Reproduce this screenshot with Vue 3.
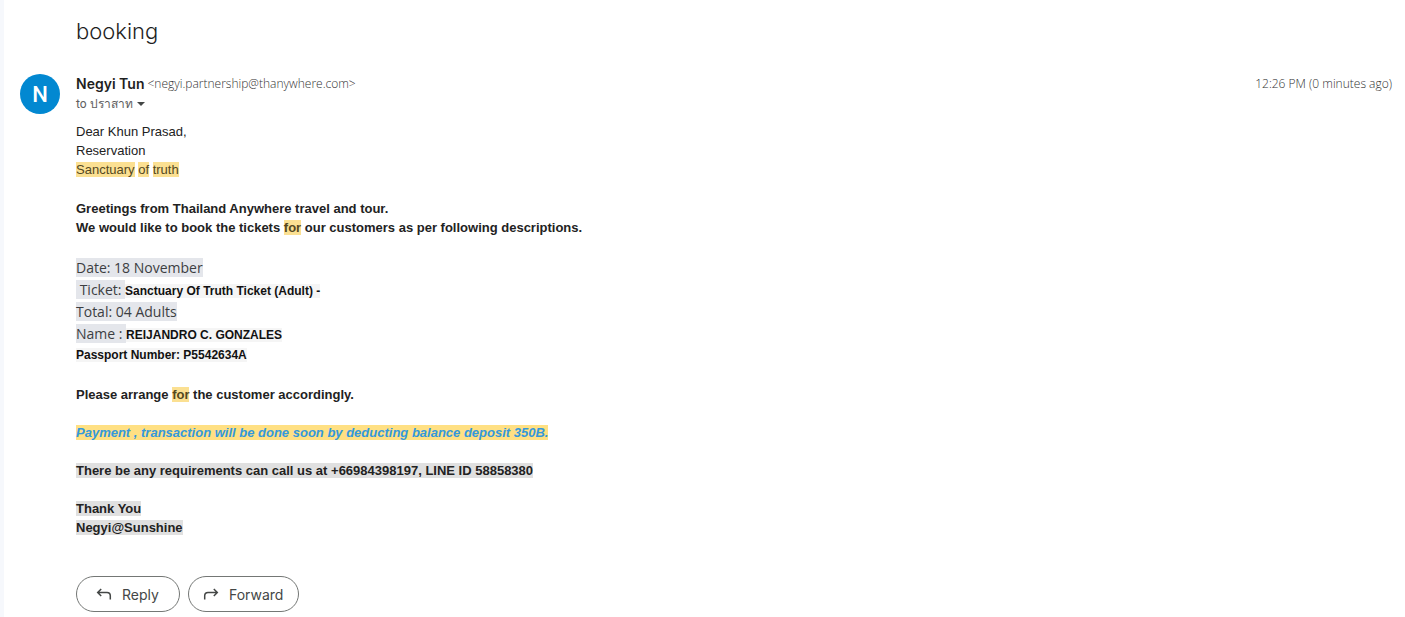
<script setup>
const message = {
  subject: 'booking',
  sender: 'Negyi Tun',
  address: 'negyi.partnership@thanywhere.com',
  recipient: 'ปราสาท',
  time: '12:26 PM (0 minutes ago)',
}
</script>

<template>
  <main class="mail">
    <h1 class="subject">{{ message.subject }}</h1>

    <article class="message">
      <div class="avatar" aria-hidden="true">N</div>

      <div class="content">
        <header class="head">
          <div class="who">
            <h2 class="sender">{{ message.sender }}</h2>
            <span class="address">&lt;{{ message.address }}&gt;</span>
          </div>
          <time class="time">{{ message.time }}</time>
        </header>

        <button class="recipient" type="button">
          <span>to {{ message.recipient }}</span>
          <svg width="8" height="4" viewBox="0 0 8 4" aria-hidden="true"><path d="M0 0h8L4 4z" fill="#444746" /></svg>
        </button>

        <div class="body">
          <p>
            Dear Khun Prasad,<br />
            Reservation<br />
            <mark>Sanctuary</mark> <mark>of</mark> <mark>truth</mark>
          </p>

          <p class="strong">
            Greetings from Thailand Anywhere travel and tour.<br />
            We would like to book the tickets <mark>for</mark> our customers as per following descriptions.
          </p>

          <div class="details">
            <div class="row"><span class="label">Date: 18 November</span></div>
            <div class="row"><span class="label">&nbsp;Ticket:&nbsp;</span><span class="value">Sanctuary Of Truth Ticket (Adult) -</span></div>
            <div class="row"><span class="label">Total: 04 Adults</span></div>
            <div class="row"><span class="label">Name :&nbsp;</span><span class="value">REIJANDRO C. GONZALES</span></div>
            <div class="passport"><span class="value">Passport Number: P5542634A</span></div>
          </div>

          <div class="closing">
            <p>Please arrange <mark>for</mark> the customer accordingly.</p>
            <p><em class="payment">Payment , transaction will be done soon by deducting balance deposit 350B.</em></p>
            <p><span class="shade">There be any requirements can call us at +66984398197, LINE ID 58858380</span></p>
            <p>
              <span class="shade">Thank You</span><br />
              <span class="shade">Negyi@Sunshine</span>
            </p>
          </div>
        </div>

        <footer class="actions">
          <button class="action" type="button">
            <svg width="20" height="20" viewBox="0 0 20 20" aria-hidden="true"><path d="M7.200 5 3.700 8.500l3.500 3.500M3.700 8.500H13q3.300 0 3.300 3.300V15.500" /></svg>
            Reply
          </button>
          <button class="action" type="button">
            <svg width="20" height="20" viewBox="0 0 20 20" aria-hidden="true"><path d="m12.800 5 3.500 3.500-3.500 3.500M16.300 8.500H7q-3.300 0-3.300 3.300V15.500" /></svg>
            Forward
          </button>
        </footer>
      </div>
    </article>
  </main>
</template>

<style>
body {
  margin: 0;
  background: #fff;
}
</style>

<style scoped>
.mail {
  box-sizing: border-box;
  min-height: 100vh;
  padding: 16px 13px 5px 16px;
  border-left: 4px solid #f6f8fc;
  color: #222;
  font-family: Inter, Roboto, "Noto Sans", sans-serif;
}

.subject {
  margin: 0 0 28px 56px;
  color: #1f1f1f;
  font-size: 22px;
  font-weight: 300;
  line-height: 30px;
}

.message {
  display: flex;
  gap: 16px;
}

.avatar {
  display: flex;
  flex: none;
  align-items: center;
  justify-content: center;
  width: 40px;
  height: 40px;
  border-radius: 50%;
  background: #0288d1;
  color: #fff;
  font-family: Roboto, sans-serif;
  font-size: 22px;
  font-weight: 500;
}

.content {
  flex: 1;
  min-width: 0;
}

.head {
  display: flex;
  justify-content: space-between;
  line-height: 20px;
}

.who {
  display: flex;
  gap: 3px;
}

.sender {
  margin: 0;
  color: #1f1f1f;
  font-size: 14px;
  font-weight: 600;
}

.address,
.time {
  color: #333;
  font-family: "Open Sans", "Noto Sans", sans-serif;
  font-size: 12px;
  font-weight: 300;
}

.recipient {
  display: flex;
  gap: 4px;
  align-items: center;
  padding: 0;
  border: 0;
  background: none;
  color: #5e5e5e;
  font-family: Roboto, "Noto Sans", sans-serif;
  font-size: 12px;
  line-height: 20px;
}

.body {
  margin-top: 8px;
  font-family: "Liberation Sans", Arial, sans-serif;
  font-size: 13px;
  line-height: 19px;
}

.body p {
  margin: 0 0 20px;
}

.body .closing p {
  margin-bottom: 19px;
}

.strong,
.closing {
  font-weight: 700;
}

mark {
  background: #fbe092;
  color: #54481f;
}

.details {
  margin-bottom: 21px;
}

.row {
  font-family: "Open Sans", "Noto Sans", sans-serif;
  font-size: 14px;
  font-variant-ligatures: none;
  line-height: 22px;
}

.label {
  background: #e4e6eb;
  color: #3c3e42;
}

.value {
  background: #f5f5f5;
  color: #111;
  font-family: "Liberation Sans", Arial, sans-serif;
  font-size: 12px;
  font-weight: 700;
  line-height: 16px;
}

.payment {
  background: #ffe083;
  color: #3498db;
}

.shade {
  background: #e0e0e0;
}

.actions {
  display: flex;
  gap: 8px;
  margin-top: 39px;
}

.action {
  display: flex;
  gap: 8px;
  align-items: center;
  justify-content: center;
  min-width: 104px;
  height: 36px;
  padding: 0 15px 0 12px;
  border: 1px solid #747775;
  border-radius: 18px;
  background: #fff;
  color: #444746;
  font-family: Inter, Roboto, sans-serif;
  font-size: 14px;
}

.action svg {
  fill: none;
  stroke: #444746;
  stroke-width: 1.5;
}
</style>
